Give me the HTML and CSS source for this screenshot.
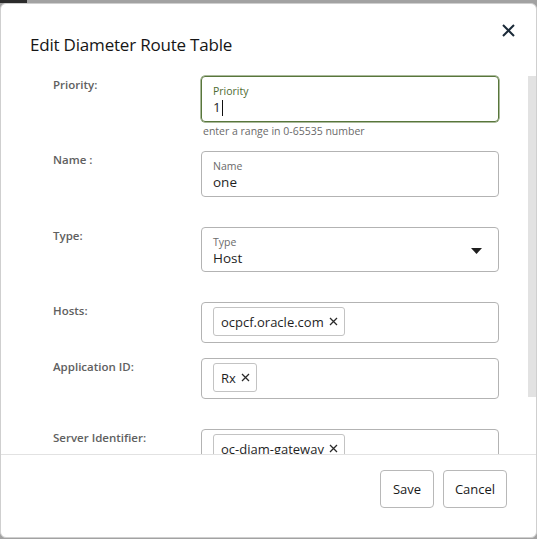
FILE: index.html
```html
<!DOCTYPE html>
<html>
<head>
<meta charset="utf-8">
<link rel="stylesheet" href="styles.css">
</head>
<body>
<div class="backdrop-strip"></div>
<div class="dialog">
  <div class="header">
    <h1 class="title">Edit Diameter Route Table</h1>
    <button class="close" aria-label="Close">
      <svg width="13" height="13" viewBox="0 0 13 13"><path d="M1 1L12 12M12 1L1 12" stroke="#1b2a38" stroke-width="2" fill="none"/></svg>
    </button>
  </div>
  <div class="body">
    <div class="form">
      <div class="row row-priority">
        <div class="label">Priority:</div>
        <div class="field-col">
          <div class="field field-focus">
            <div class="field-label">Priority</div>
            <div class="field-value">1<span class="cursor"></span></div>
          </div>
          <div class="helper">enter a range in 0-65535 number</div>
        </div>
      </div>
      <div class="row row-name">
        <div class="label">Name :</div>
        <div class="field-col">
          <div class="field">
            <div class="field-label">Name</div>
            <div class="field-value">one</div>
          </div>
        </div>
      </div>
      <div class="row row-type">
        <div class="label">Type:</div>
        <div class="field-col">
          <div class="field field-select">
            <div class="select-text">
              <div class="field-label">Type</div>
              <div class="field-value">Host</div>
            </div>
            <svg class="caret" width="11" height="6" viewBox="0 0 11 6"><path d="M0 0H11L5.5 6Z" fill="#1f1f1f"/></svg>
          </div>
        </div>
      </div>
      <div class="row row-hosts">
        <div class="label">Hosts:</div>
        <div class="field-col">
          <div class="field field-chips">
            <span class="chip">ocpcf.oracle.com<svg class="chip-x" width="9" height="9" viewBox="0 0 9 9"><path d="M1 1L8 8M8 1L1 8" stroke="#2a2a2a" stroke-width="1.3" fill="none"/></svg></span>
          </div>
        </div>
      </div>
      <div class="row row-app">
        <div class="label">Application ID:</div>
        <div class="field-col">
          <div class="field field-chips">
            <span class="chip">Rx<svg class="chip-x" width="9" height="9" viewBox="0 0 9 9"><path d="M1 1L8 8M8 1L1 8" stroke="#2a2a2a" stroke-width="1.3" fill="none"/></svg></span>
          </div>
        </div>
      </div>
      <div class="row row-server">
        <div class="label">Server Identifier:</div>
        <div class="field-col">
          <div class="field field-chips">
            <span class="chip">oc-diam-gateway<svg class="chip-x" width="9" height="9" viewBox="0 0 9 9"><path d="M1 1L8 8M8 1L1 8" stroke="#2a2a2a" stroke-width="1.3" fill="none"/></svg></span>
          </div>
        </div>
      </div>
    </div>
    <div class="scrollbar"><div class="thumb"></div></div>
  </div>
  <div class="footer">
    <button class="btn btn-save">Save</button>
    <button class="btn btn-cancel">Cancel</button>
  </div>
</div>
</body>
</html>
```
FILE: styles.css
```css
* { box-sizing: border-box; }
html, body { margin: 0; padding: 0; }
body {
  width: 537px;
  height: 539px;
  overflow: hidden;
  background: #a2a2a2;
  font-family: "Open Sans", "Noto Sans", sans-serif;
  color: #222;
  display: flex;
  flex-direction: column;
}
.backdrop-strip {
  height: 3px;
  flex: none;
  background: linear-gradient(to right, #2b2b2b 0, #2b2b2b 27px, #a2a2a2 27px);
}
.dialog {
  flex: none;
  width: 537px;
  height: 535px;
  background: #fff;
  border: 1px solid #cfcfcf;
  border-radius: 6px;
  display: flex;
  flex-direction: column;
  overflow: hidden;
}
.header {
  height: 61px;
  flex: none;
  display: flex;
  justify-content: space-between;
  align-items: flex-start;
  padding: 0 20px 0 29px;
}
.title {
  margin: 29px 0 0 0;
  font-size: 17px;
  font-weight: 400;
  color: #161616;
  line-height: 24px;
  letter-spacing: -0.2px;
}
.close {
  margin-top: 20px;
  width: 14px;
  height: 14px;
  padding: 0;
  border: 0;
  background: none;
  display: flex;
}
.body {
  flex: 1;
  display: flex;
  overflow: hidden;
  border-bottom: 1px solid #e2e2e2;
}
.form {
  flex: 1;
  padding: 11px 0 0 52px;
}
.scrollbar {
  width: 8px;
  flex: none;
  padding-top: 11px;
}
.thumb {
  height: 321px;
  background: #e2e2e2;
}
.row {
  display: flex;
}
.label {
  width: 148px;
  flex: none;
  font-size: 11.5px;
  font-weight: 600;
  color: #606060;
  line-height: 16px;
  padding-top: 1px;
}
.field-col {
  width: 298px;
  flex: none;
}
.field {
  border: 1px solid #b3b3b3;
  border-radius: 4px;
  padding: 7px 11px 0 11px;
  height: 46px;
}
.field-focus {
  border-color: #58763b;
  box-shadow: 0 0 0 0.5px #58763b;
}
.field-label {
  font-size: 10.5px;
  line-height: 14px;
  color: #6a6a6a;
}
.field-focus .field-label { color: #4e6b31; }
.field-value {
  font-size: 13.5px;
  line-height: 19px;
  color: #1f1f1f;
  display: flex;
  align-items: center;
}
.cursor {
  display: inline-block;
  width: 1px;
  height: 16px;
  background: #111;
  margin-left: 1px;
}
.helper {
  font-size: 10.5px;
  color: #6a6a6a;
  line-height: 14px;
  padding: 2px 0 0 2px;
}
.field-select {
  height: 45px;
  display: flex;
  align-items: center;
  justify-content: space-between;
  padding-right: 16px;
}
.select-text { align-self: flex-start; }
.caret { margin-top: -4px; }
.field-chips {
  height: 41px;
  padding: 4px 11px;
  display: flex;
  align-items: flex-start;
}
.chip {
  display: inline-flex;
  align-items: center;
  height: 29px;
  padding: 0 6px 0 7px;
  border: 1px solid #c3c3c3;
  border-radius: 3px;
  font-size: 13px;
  color: #1f1f1f;
}
.chip-x {
  margin-left: 5px;
}
.row-priority { margin-bottom: 13px; }
.row-name { margin-bottom: 30px; }
.row-type { margin-bottom: 30px; }
.row-hosts { margin-bottom: 15px; }
.row-app { margin-bottom: 30px; }
.footer {
  flex: none;
  height: 82px;
  display: flex;
  justify-content: flex-end;
  align-items: flex-start;
  gap: 9px;
  padding: 15px 29px 0 0;
}
.btn {
  height: 38px;
  border: 1px solid #b8b8b8;
  border-radius: 4px;
  background: #fff;
  font-family: "Open Sans", "Noto Sans", sans-serif;
  font-size: 13px;
  color: #1a1a1a;
  padding: 0;
}
.btn-save { width: 54px; }
.btn-cancel { width: 64px; }
```
